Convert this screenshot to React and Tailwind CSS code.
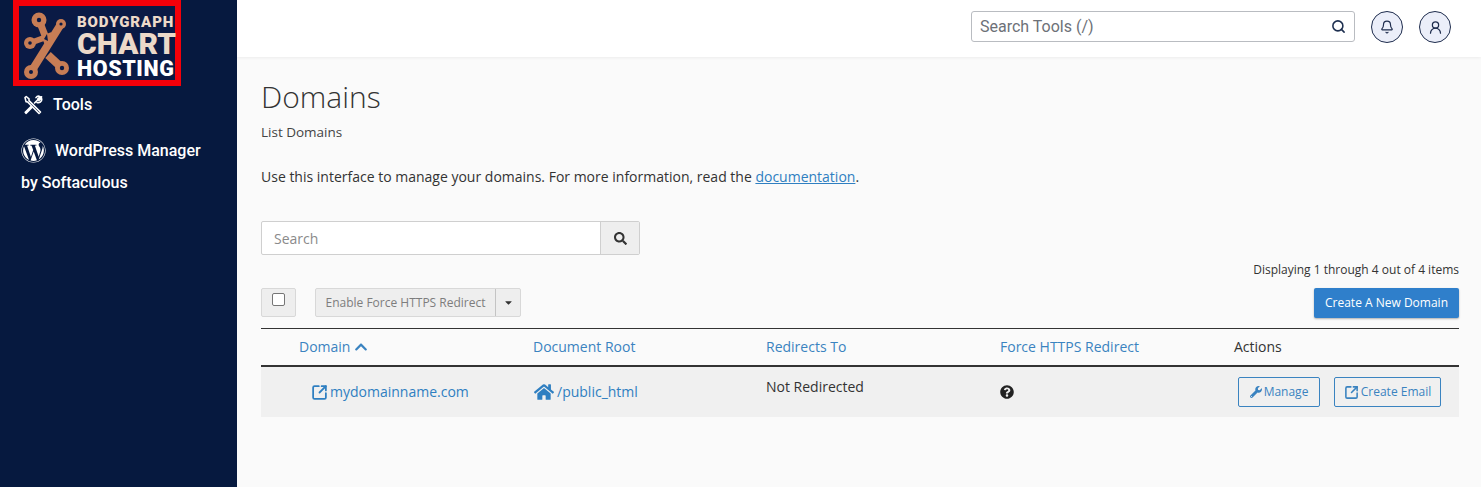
import { Bell, Search, SquareArrowOutUpRight, UserRound } from 'lucide-react';
import { FaCaretDown, FaChevronUp, FaHome, FaQuestionCircle, FaSearch, FaWordpress, FaWrench } from 'react-icons/fa';

const openSans = "font-['Open_Sans',sans-serif]";

function LogoMark() {
    return (
        <svg width="56" height="74" viewBox="0 0 56 74" fill="none" stroke="#c77d55" className="shrink-0">
            <path d="M20 14 L30 40" strokeWidth="7" />
            <path d="M42 18 L12 66" strokeWidth="8" />
            <path d="M11 37 L33 29" strokeWidth="6" />
            <path d="M29 49 L43 62" strokeWidth="8" />
            <path d="M25 33 L28 28 L29 35 Z" fill="#0a1a45" stroke="none" />
            <circle cx="20" cy="14" r="7.5" fill="#c77d55" stroke="none" />
            <circle cx="42" cy="18" r="5" fill="#c77d55" stroke="none" />
            <circle cx="11" cy="37" r="6" fill="#c77d55" stroke="none" />
            <circle cx="12" cy="66" r="7" fill="#c77d55" stroke="none" />
            <circle cx="43" cy="62" r="7" fill="#c77d55" stroke="none" />
            <circle cx="20" cy="14" r="2.2" fill="#0a1a45" stroke="none" />
            <circle cx="42" cy="18" r="1.6" fill="#0a1a45" stroke="none" />
            <circle cx="11" cy="37" r="1.8" fill="#0a1a45" stroke="none" />
            <circle cx="12" cy="66" r="2" fill="#0a1a45" stroke="none" />
            <circle cx="43" cy="62" r="2.2" fill="#0a1a45" stroke="none" />
        </svg>
    );
}

function ToolsIcon() {
    return (
        <svg width="20" height="20" viewBox="0 0 20 20" fill="none" stroke="white" strokeWidth="1.6" strokeLinecap="round" strokeLinejoin="round" className="shrink-0">
            <path d="M2 2.5 L3.2 1.5 L6 3.8 L6 5.6 L17.5 17 L16 18.5 L4.6 7 L3 6.6 Z" />
            <path d="M11.5 8 L17 2.6" />
            <path d="M17 2.6 L18.6 1.8 M13 2.6 C14 1.2 15.8 1 17 1.6 L14.8 4 L16 5.4 L18.4 3 C19 4.4 18.6 6 17.4 7 C16.2 7.8 15 7.8 14 7.4" />
            <path d="M8 11.5 L2.2 17.3 L3 18.3 L9 12.5" />
        </svg>
    );
}

function Logo() {
    return (
        <div className="ml-[13px] flex h-[86px] w-[168px] border-[6px] border-[#f40009] bg-[#0a1a45]">
            <LogoMark />
            <div className="ml-[2px] flex w-[98px] flex-col pt-[9px] font-['Roboto',sans-serif] font-black">
                <span className="text-[15px] leading-[15px] tracking-[0.9px] whitespace-nowrap text-[#ecd9c9]">BODYGRAPH</span>
                <span className="text-[30px] leading-[28px] whitespace-nowrap text-[#ecd9c9]">CHART</span>
                <span className="text-[21.5px] leading-[21px] tracking-[0.6px] whitespace-nowrap text-white">HOSTING</span>
            </div>
        </div>
    );
}

function Sidebar() {
    return (
        <aside className="w-[237px] shrink-0 bg-[#06193f] font-['Roboto',sans-serif] text-base font-medium text-white">
            <Logo />
            <div className="mt-[7px] flex items-center pl-[23px]">
                <ToolsIcon />
                <span className="ml-[10px] leading-6">Tools</span>
            </div>
            <div className="mt-[18px] w-[210px] pl-[21px] leading-8">
                <FaWordpress size={25} className="mr-[9px] inline-block align-[-7px]" />
                WordPress Manager by Softaculous
            </div>
        </aside>
    );
}

function Header() {
    return (
        <header className="flex h-[57px] shrink-0 items-start justify-end bg-white pt-[11px] pr-[30px] shadow-[0_1px_3px_rgba(0,0,0,0.06)]">
            <div className="flex h-[31px] w-[384px] items-center justify-between rounded-[3px] border border-[#b9bcc1] pr-[8px] pl-[8px] font-['Roboto',sans-serif] text-base text-[#6d7178]">
                Search Tools (/)
                <Search size={15} strokeWidth={2.5} className="text-[#1e3050]" />
            </div>
            <IconCircle className="ml-[16px]"><Bell size={14} /></IconCircle>
            <IconCircle className="ml-[16px]"><UserRound size={15} /></IconCircle>
        </header>
    );
}

function IconCircle({ children, className }) {
    return (
        <div className={`flex h-[32px] w-[32px] items-center justify-center rounded-full border border-[#1e2c4d] bg-[#ebeef9] text-[#1e2c4d] ${className}`}>
            {children}
        </div>
    );
}

function Toolbar() {
    return (
        <div className="mt-[9px] flex items-start justify-between">
            <div className="flex">
                <div className="flex h-[29px] w-[35px] justify-center rounded-[2px] border border-[#d8d8d8] bg-[#eeeeee] pt-[4px]">
                    <span className="h-[13px] w-[13px] rounded-[2px] border border-[#767676] bg-white" />
                </div>
                <div className="ml-[19px] flex h-[29px] rounded-[2px] border border-[#d8d8d8] bg-[#eeeeee] text-xs text-[#7d7d7d]">
                    <span className="flex w-[180px] items-center justify-center border-r border-[#c4c4c4]">Enable Force HTTPS Redirect</span>
                    <span className="flex w-[24px] items-center justify-center text-[#333]"><FaCaretDown size={11} /></span>
                </div>
            </div>
            <button className="flex h-[30px] w-[145px] items-center justify-center rounded-[2px] bg-[#2f7fcb] text-xs font-medium text-white shadow-[0_1px_2px_rgba(0,0,0,0.3)]">
                Create A New Domain
            </button>
        </div>
    );
}

function DomainTable() {
    return (
        <div className="mt-[10px] text-sm">
            <div className="grid h-[39px] grid-cols-[234px_233px_234px_234px_1fr] items-center border-t border-b-2 border-t-[#333] border-b-[#333] pl-[38px] text-[#3a83c0]">
                <span className="flex items-center gap-[4px]">Domain <FaChevronUp size={14} /></span>
                <span>Document Root</span>
                <span>Redirects To</span>
                <span>Force HTTPS Redirect</span>
                <span className="text-[#333]">Actions</span>
            </div>
            <div className="grid h-[50px] grid-cols-[234px_233px_234px_234px_1fr] bg-[#f0f0f0] pl-[38px]">
                <a className="flex items-center gap-[2px] pl-[12px] text-[#2f7fc1]">
                    <SquareArrowOutUpRight size={17} strokeWidth={2.5} />
                    mydomainname.com
                </a>
                <a className="flex items-center gap-[3px] pl-px text-[#2f7fc1]">
                    <FaHome size={20} />
                    /public_html
                </a>
                <span className="pt-[10px] text-[#333]">Not Redirected</span>
                <span className="flex items-center text-[#222]"><FaQuestionCircle size={14} /></span>
                <div className="flex items-center gap-[14px] pl-[4px] text-xs text-[#3a83c0]">
                    <a className="flex h-[30px] w-[82px] items-center justify-center gap-[2px] rounded-[2px] border border-[#3a83c0]">
                        <FaWrench size={12} />
                        Manage
                    </a>
                    <a className="flex h-[30px] w-[107px] items-center justify-center gap-[2px] rounded-[2px] border border-[#3a83c0]">
                        <SquareArrowOutUpRight size={15} strokeWidth={2.5} />
                        Create Email
                    </a>
                </div>
            </div>
        </div>
    );
}

export default function App() {
    return (
        <div className="flex h-[487px] w-[1481px] overflow-hidden bg-[#fafafa]">
            <Sidebar />
            <div className="flex min-w-0 flex-1 flex-col">
                <Header />
                <main className={`${openSans} pt-[20px] pr-[22px] pl-[24px] text-[#333]`}>
                    <h1 className="text-[30px] leading-[40px] font-light">Domains</h1>
                    <p className="mt-[5px] text-[13.5px] leading-[20px] text-[#444]">List Domains</p>
                    <p className="mt-[25px] text-sm leading-[20px]">
                        Use this interface to manage your domains. For more information, read the{' '}
                        <a className="text-[#2f7fc1] underline">documentation</a>.
                    </p>
                    <div className="mt-[34px] flex h-[34px] w-[379px] rounded-[2px] border border-[#cfcfcf] bg-white">
                        <span className="flex flex-1 items-center pt-px pl-[12px] text-sm text-[#8a8a8a]">Search</span>
                        <span className="flex w-[39px] items-center justify-center border-l border-[#cfcfcf] bg-[#eeeeee] text-[#333]">
                            <FaSearch size={13} />
                        </span>
                    </div>
                    <p className="mt-[6px] text-right text-xs leading-[18px]">Displaying 1 through 4 out of 4 items</p>
                    <Toolbar />
                    <DomainTable />
                </main>
            </div>
        </div>
    );
}
